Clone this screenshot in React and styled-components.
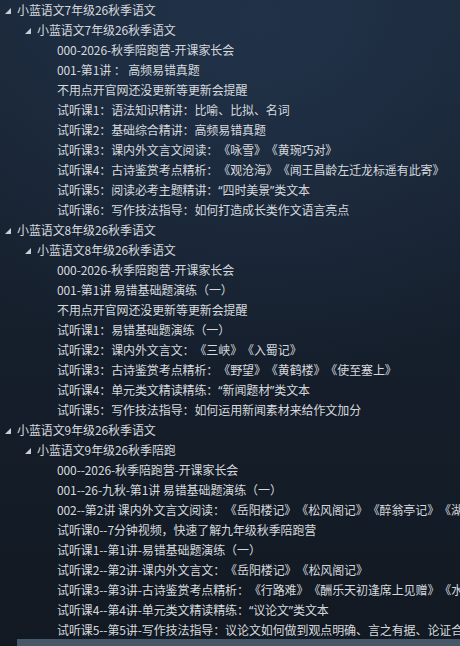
import React from 'react'
import styled, { createGlobalStyle } from 'styled-components'

const GlobalStyle = createGlobalStyle`
  html, body {
    margin: 0;
    padding: 0;
    background: #161f2c;
  }
`

const tree = [
    {
        name: '小蓝语文7年级26秋季语文',
        sub: {
            name: '小蓝语文7年级26秋季语文',
            items: [
                '000-2026-秋季陪跑营-开课家长会',
                '001-第1讲 ： 高频易错真题',
                '不用点开官网还没更新等更新会提醒',
                '试听课1：语法知识精讲：比喻、比拟、名词',
                '试听课2：基础综合精讲：高频易错真题',
                '试听课3：课内外文言文阅读：《咏雪》《黄琬巧对》',
                '试听课4：古诗鉴赏考点精析：《观沧海》《闻王昌龄左迁龙标遥有此寄》',
                '试听课5：阅读必考主题精讲：“四时美景”类文本',
                '试听课6：写作技法指导：如何打造成长类作文语言亮点',
            ],
        },
    },
    {
        name: '小蓝语文8年级26秋季语文',
        sub: {
            name: '小蓝语文8年级26秋季语文',
            items: [
                '000-2026-秋季陪跑营-开课家长会',
                '001-第1讲 易错基础题演练（一）',
                '不用点开官网还没更新等更新会提醒',
                '试听课1：易错基础题演练（一）',
                '试听课2：课内外文言文：《三峡》《入蜀记》',
                '试听课3：古诗鉴赏考点精析：《野望》《黄鹤楼》《使至塞上》',
                '试听课4：单元类文精读精练：“新闻题材”类文本',
                '试听课5：写作技法指导：如何运用新闻素材来给作文加分',
            ],
        },
    },
    {
        name: '小蓝语文9年级26秋季语文',
        sub: {
            name: '小蓝语文9年级26秋季陪跑',
            items: [
                '000--2026-秋季陪跑营-开课家长会',
                '001--26-九秋-第1讲 易错基础题演练（一）',
                '002--第2讲 课内外文言文阅读：《岳阳楼记》《松风阁记》《醉翁亭记》《湖心亭看雪》',
                '试听课0--7分钟视频，快速了解九年级秋季陪跑营',
                '试听课1--第1讲-易错基础题演练（一）',
                '试听课2--第2讲-课内外文言文：《岳阳楼记》《松风阁记》',
                '试听课3--第3讲-古诗鉴赏考点精析：《行路难》《酬乐天初逢席上见赠》《水调歌头》',
                '试听课4--第4讲-单元类文精读精练：“议论文”类文本',
                '试听课5--第5讲-写作技法指导：议论文如何做到观点明确、言之有据、论证合理',
            ],
        },
    },
]

// curly quotes show narrow in the original font, so set them in a latin face
const renderText = (text) =>
    text.split(/([“”])/).map((part, i) =>
        part === '“' || part === '”' ? <Quote key={i}>{part}</Quote> : part
    )

const Arrow = () => (
    <ArrowBox viewBox="0 0 6 6">
        <polygon points="6,0 6,6 0,6" fill="#c9ced4" />
    </ArrowBox>
)

const App = () => {
    return (
        <Panel>
            <GlobalStyle />
            <Tree>
                {tree.map(g => (
                    <React.Fragment key={g.name}>
                        <Row $level={0}>
                            <Arrow />
                            <Label>{g.name}</Label>
                        </Row>
                        <Row $level={1}>
                            <Arrow />
                            <Label>{g.sub.name}</Label>
                        </Row>
                        {g.sub.items.map(item => (
                            <Row key={item} $level={2}>
                                <Spacer />
                                <Label>{renderText(item)}</Label>
                            </Row>
                        ))}
                    </React.Fragment>
                ))}
            </Tree>
            <ScrollThumb />
        </Panel>
    )
}

const Panel = styled.div`
  position: relative;
  width: 460px;
  height: 646px;
  overflow: hidden;
  background:
    radial-gradient(ellipse 420px 360px at 260px 20px, rgba(34, 52, 76, 0.85), rgba(34, 52, 76, 0) 100%),
    linear-gradient(180deg, #1a2636 0%, #151e2b 55%, #121922 100%);
  font-family: "Noto Sans CJK SC", "Microsoft YaHei", "Noto Sans", sans-serif;
  font-size: 12px;
  color: #d5d9de;
`

const Tree = styled.div`
  display: flex;
  flex-direction: column;
`

const Row = styled.div`
  display: flex;
  align-items: center;
  height: 20px;
  padding-left: ${p => 5 + p.$level * 20}px;
  white-space: nowrap;
`

const ArrowBox = styled.svg`
  width: 6px;
  height: 6px;
  flex: none;
  margin-right: 6px;
  margin-top: 2px;
`

const Spacer = styled.span`
  width: 12px;
  flex: none;
`

const Label = styled.span`
  line-height: 20px;
  letter-spacing: -0.1px;
  text-spacing-trim: space-all;
`

const Quote = styled.span`
  font-family: "Noto Sans", "DejaVu Sans", sans-serif;
`

const ScrollThumb = styled.div`
  position: absolute;
  left: 17px;
  right: 0;
  bottom: 0;
  height: 7px;
  background: #47576a;
`

export default App
